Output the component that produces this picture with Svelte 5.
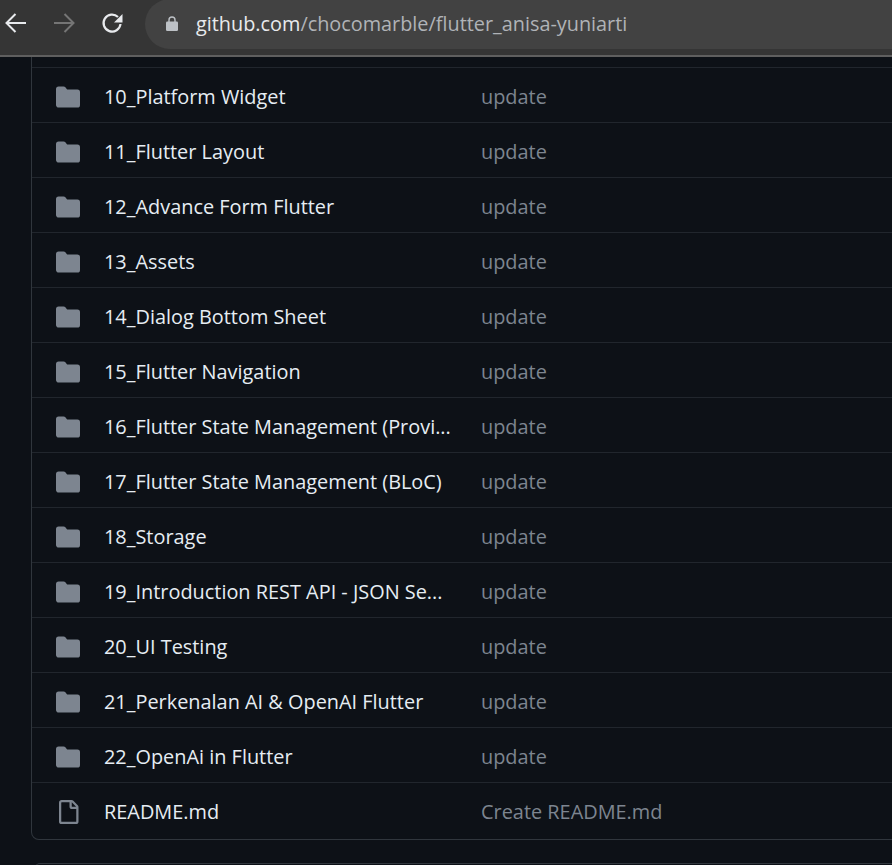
<script>
	const rows = [
		'10_Platform Widget',
		'11_Flutter Layout',
		'12_Advance Form Flutter',
		'13_Assets',
		'14_Dialog Bottom Sheet',
		'15_Flutter Navigation',
		'16_Flutter State Management (Provi...',
		'17_Flutter State Management (BLoC)',
		'18_Storage',
		'19_Introduction REST API - JSON Se...',
		'20_UI Testing',
		'21_Perkenalan AI & OpenAI Flutter',
		'22_OpenAi in Flutter'
	];
</script>

<div class="page">
	<header class="toolbar">
		<svg class="nav" viewBox="0 0 24 24" width="24" height="24"><path d="M23 12H4M12.500 3 3.500 12l9 9" fill="none" stroke="#e8eaed" stroke-width="2"/></svg>
		<svg class="nav forward" viewBox="0 0 24 24" width="24" height="24"><path d="M1 12h19M11.500 3l9 9-9 9" fill="none" stroke="#757575" stroke-width="2"/></svg>
		<svg class="nav reload" viewBox="0 0 24 24" width="24" height="24"><path d="M20.500 13a8.500 8.500 0 1 1-2.500-7" fill="none" stroke="#e8eaed" stroke-width="2.200"/><path d="M22.500 3v8.500H14z" fill="#e8eaed"/></svg>
		<div class="omnibox">
			<svg class="lock" viewBox="0 0 12 15" width="12" height="15"><path d="M3 6V4a3 3 0 0 1 6 0v2" fill="none" stroke="#bdc1c6" stroke-width="1.400"/><rect x="0" y="5.500" width="12" height="9.500" rx="1.200" fill="#bdc1c6"/></svg>
			<span class="url">github.com<span class="path">/chocomarble/flutter_anisa-yuniarti</span></span>
		</div>
	</header>

	<main class="content">
		<div class="table">
			<div class="clipped"></div>
			{#each rows as name}
				<div class="row">
					<svg class="icon" viewBox="0 0 16 16" width="24" height="24"><path d="M1.750 1A1.750 1.750 0 0 0 0 2.750v10.500C0 14.220.780 15 1.750 15h12.500A1.750 1.750 0 0 0 16 13.250v-8.500A1.750 1.750 0 0 0 14.250 3H7.500a.250.250 0 0 1-.200-.100l-.900-1.200C6.070 1.260 5.550 1 5 1H1.750Z" fill="#7d8590"/></svg>
					<span class="name">{name}</span>
					<span class="message">update</span>
				</div>
			{/each}
			<div class="row last">
				<svg class="icon" viewBox="0 0 16 16" width="24" height="24"><path d="M2 1.750C2 .784 2.784 0 3.750 0h6.586c.464 0 .909.184 1.237.513l2.914 2.914c.329.328.513.773.513 1.237v9.586A1.750 1.750 0 0 1 13.250 16h-9.500A1.750 1.750 0 0 1 2 14.250Zm1.750-.250a.250.250 0 0 0-.250.250v12.500c0 .138.112.250.250.250h9.500a.250.250 0 0 0 .250-.250V6h-2.750A1.750 1.750 0 0 1 9 4.250V1.500Zm6.750.062V4.250c0 .138.112.250.250.250h2.688l-.011-.013-2.914-2.914-.013-.011Z" fill="#7d8590"/></svg>
				<span class="name">README.md</span>
				<span class="message">Create README.md</span>
			</div>
		</div>
		<div class="next"></div>
	</main>
</div>

<style>
	:global(body) {
		background: #0d1117;
	}

	.page {
		width: 892px;
		height: 865px;
		overflow: hidden;
		font-family: "Open Sans", "Noto Sans", sans-serif;
		background: #0d1117;
	}

	.toolbar {
		display: flex;
		align-items: flex-start;
		height: 55px;
		background: #353535;
		border-bottom: 2px solid #5f5f5f;
		overflow: hidden;
	}

	.nav {
		flex: none;
		margin-top: 11px;
	}
	.nav:first-child {
		margin-left: 3px;
	}
	.forward {
		margin-left: 26px;
	}
	.reload {
		margin-left: 23px;
	}

	.omnibox {
		flex: 1;
		box-sizing: border-box;
		display: flex;
		align-items: center;
		height: 50px;
		margin: -1px -30px 0 21px;
		padding: 0 0 2px 21px;
		border-radius: 25px;
		background: #424242;
	}

	.lock {
		margin-top: 1px;
	}

	.url {
		margin-left: 18px;
		font-size: 19.85px;
		color: #e8eaed;
	}
	.path {
		color: #b0b3b7;
	}

	.content {
		padding-left: 31px;
	}

	.table {
		margin-right: -20px;
		border: 1px solid #30363d;
		border-top: 0;
		border-radius: 0 0 8px 8px;
	}

	.clipped {
		height: 10px;
		border-bottom: 1px solid #21262d;
	}

	.row {
		box-sizing: border-box;
		display: flex;
		align-items: center;
		height: 55px;
		padding: 2px 0 0 24px;
		border-bottom: 1px solid #21262d;
		font-size: 19.9px;
	}
	.row.last {
		height: 56px;
		padding-top: 0;
		border-bottom: 0;
	}

	.icon {
		flex: none;
		margin-top: 2px;
	}

	.name {
		width: 349px;
		margin-left: 24px;
		white-space: nowrap;
		color: #e6edf3;
	}

	.message {
		margin-left: 28px;
		color: #7d8590;
	}

	.next {
		margin: 23px 0 0 4px;
		border-top: 1px solid #30363d;
		border-radius: 8px 0 0 0;
		height: 4px;
	}
</style>
